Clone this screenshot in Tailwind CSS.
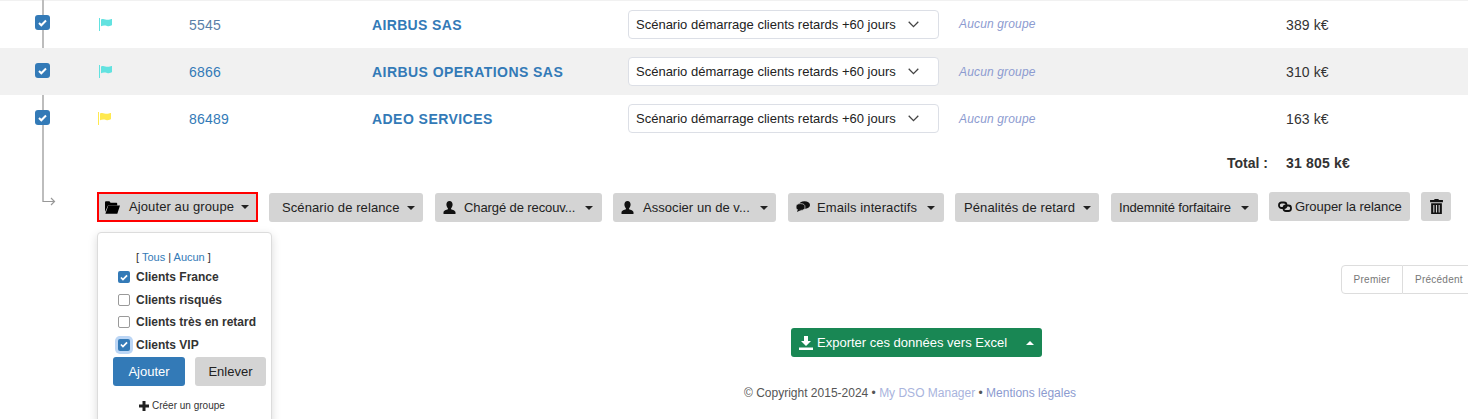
<!DOCTYPE html>
<html lang="fr"><head><meta charset="utf-8"><title>Relances</title>
<script src="https://cdn.jsdelivr.net/npm/@tailwindcss/browser@4"></script></head>
<body class="bg-white">
<div class="relative w-[1468px] h-[419px] overflow-hidden font-['Liberation_Sans',Arial,sans-serif] text-[14px] text-[#333]">
  <!-- connector line -->
  <div class="absolute left-[42px] top-0 w-[2px] h-[202px] bg-[#bdbdbd]"></div>
  <svg class="absolute left-[42px] top-[196px]" width="14" height="12" viewBox="0 0 14 12" fill="none" stroke="#999" stroke-width="1.200"><path d="M1 5.500H12.500M9 2l3.500 3.500L9 9"/></svg>

  <div class="h-px bg-[#f1f1f1]"></div>
  <div class="flex items-center h-[47px] relative">
    <div class="w-[99px] pl-[35px] -mt-[4px]"><span class="flex w-[15px] h-[15px] rounded-[3px] bg-[#337ab7] items-center justify-center"><svg width="9" height="8" viewBox="0 0 9 8" fill="none" stroke="#fff" stroke-width="2"><path d="M1 4l2.300 2.300L8 1.500"/></svg></span></div>
    <div class="w-[90px]"><svg class="block" width="14" height="14" viewBox="0 0 14 14"><path d="M0 0h1v13H0z" fill="#62e2e0"/><path d="M2 1.500c3-1.500 5 1 8 .2 1-.2 2.500-.7 3-.7v6c-1 1-3 1.500-5 1-2-.6-4-.6-6 .2z" fill="#62e2e0"/></svg></div>
    <div class="w-[183px] mt-px text-[#5a7fa8] tracking-[0.2px]">5545</div>
    <div class="w-[256px] mt-px font-bold text-[#337ab7] tracking-[0.35px]">AIRBUS SAS</div>
    <div class="w-[331px]"><div class="flex items-center justify-between w-[311px] h-[29px] rounded-[4px] border border-[#dcdfe6] bg-white pl-[7px] pr-[19px] text-[13px] whitespace-nowrap text-[#222]">Scénario démarrage clients retards +60 jours<svg width="11" height="7" viewBox="0 0 11 7" fill="none" stroke="#444" stroke-width="1.300"><path d="M.7.8l4.800 4.800L10.300.8"/></svg></div></div>
    <div class="w-[327px] italic text-[12px] tracking-[0.15px] text-[#8c9bd0] -mt-[2px]">Aucun groupe</div>
    <div class="mt-px tracking-[0.1px]">389 k€</div>
  </div>
  <div class="flex items-center h-[47px] relative bg-[#f1f1f1]">
    <div class="w-[99px] pl-[35px] -mt-[2px]"><span class="flex w-[15px] h-[15px] rounded-[3px] bg-[#337ab7] items-center justify-center"><svg width="9" height="8" viewBox="0 0 9 8" fill="none" stroke="#fff" stroke-width="2"><path d="M1 4l2.300 2.300L8 1.500"/></svg></span></div>
    <div class="w-[90px]"><svg class="block" width="14" height="14" viewBox="0 0 14 14"><path d="M0 0h1v13H0z" fill="#62e2e0"/><path d="M2 1.500c3-1.500 5 1 8 .2 1-.2 2.500-.7 3-.7v6c-1 1-3 1.500-5 1-2-.6-4-.6-6 .2z" fill="#62e2e0"/></svg></div>
    <div class="w-[183px] mt-px text-[#337ab7] tracking-[0.2px]">6866</div>
    <div class="w-[256px] mt-px font-bold text-[#337ab7] tracking-[0.45px]">AIRBUS OPERATIONS SAS</div>
    <div class="w-[331px]"><div class="flex items-center justify-between w-[311px] h-[29px] rounded-[4px] border border-[#dcdfe6] bg-white pl-[7px] pr-[19px] text-[13px] whitespace-nowrap text-[#222]">Scénario démarrage clients retards +60 jours<svg width="11" height="7" viewBox="0 0 11 7" fill="none" stroke="#444" stroke-width="1.300"><path d="M.7.8l4.800 4.800L10.300.8"/></svg></div></div>
    <div class="w-[327px] italic text-[12px] tracking-[0.15px] text-[#8c9bd0]">Aucun groupe</div>
    <div class="mt-px tracking-[0.1px]">310 k€</div>
  </div>
  <div class="flex items-center h-[47px] relative">
    <div class="w-[99px] pl-[35px] -mt-[2px]"><span class="flex w-[15px] h-[15px] rounded-[3px] bg-[#337ab7] items-center justify-center"><svg width="9" height="8" viewBox="0 0 9 8" fill="none" stroke="#fff" stroke-width="2"><path d="M1 4l2.300 2.300L8 1.500"/></svg></span></div>
    <div class="w-[90px] -ml-px mr-px"><svg class="block" width="14" height="14" viewBox="0 0 14 14"><path d="M0 0h1v13H0z" fill="#ffe94f"/><path d="M2 1.500c3-1.500 5 1 8 .2 1-.2 2.500-.7 3-.7v6c-1 1-3 1.500-5 1-2-.6-4-.6-6 .2z" fill="#ffe94f"/></svg></div>
    <div class="w-[183px] mt-px text-[#337ab7] tracking-[0.2px]">86489</div>
    <div class="w-[256px] mt-px font-bold text-[#337ab7] tracking-[0.45px]">ADEO SERVICES</div>
    <div class="w-[331px]"><div class="flex items-center justify-between w-[311px] h-[29px] rounded-[4px] border border-[#dcdfe6] bg-white pl-[7px] pr-[19px] text-[13px] whitespace-nowrap text-[#222]">Scénario démarrage clients retards +60 jours<svg width="11" height="7" viewBox="0 0 11 7" fill="none" stroke="#444" stroke-width="1.300"><path d="M.7.8l4.800 4.800L10.300.8"/></svg></div></div>
    <div class="w-[327px] mt-px italic text-[12px] tracking-[0.15px] text-[#8c9bd0]">Aucun groupe</div>
    <div class="mt-px tracking-[0.1px]">163 k€</div>
  </div>

  <div class="flex h-[51px] pt-[13px] font-bold leading-[16px]">
    <div class="w-[1268px] text-right">Total :</div>
    <div class="ml-[18px] tracking-[0.2px]">31 805 k€</div>
  </div>

  <!-- toolbar -->
  <div class="flex items-start pl-[97px] gap-[11px] h-[29px] text-[13px] whitespace-nowrap text-[#222]">
    <div class="flex items-center h-[30px] w-[161px] -mt-px border-2 border-[#f00] bg-[#d4d4d4] pl-[6px] pr-[7px]">
      <svg class="shrink-0 mr-[9px]" width="15" height="13" viewBox="0 0 15 13" fill="#000"><path d="M0 2V1.500C0 .7.500.2 1.200.2h3.200L5.600 1.700h5.600c.6 0 1 .4 1 1V4.500H3L0 11z"/><path d="M3.300 4.500H15l-2.700 8.300H.4z"/></svg>
      <span class="tracking-[0.1px]">Ajouter au groupe</span><span class="ml-auto w-0 h-0 border-x-[4px] border-x-transparent border-t-[4px] border-t-[#222]"></span>
    </div>
    <div class="flex items-center h-[29px] w-[154px] rounded-[3px] bg-[#d4d4d4] pl-[13px] pr-[8px]">
      <span class="tracking-[0.1px]">Scénario de relance</span><span class="ml-auto w-0 h-0 border-x-[4px] border-x-transparent border-t-[4px] border-t-[#222]"></span>
    </div>
    <div class="flex items-center h-[29px] w-[167px] ml-px rounded-[3px] bg-[#d4d4d4] pl-[8px] pr-[9px]">
      <svg class="shrink-0 mr-[8px]" width="13" height="13" viewBox="0 0 13 13" fill="#111"><path d="M6.500 0C8.500 0 9.600 1.500 9.600 3.600c0 1.500-.6 2.900-1.500 3.600v1.100c1.500.6 4.400 1.300 4.400 3V13H.5v-1.700c0-1.700 2.900-2.400 4.400-3V7.200C4 6.500 3.400 5.100 3.400 3.600 3.400 1.500 4.500 0 6.500 0z"/></svg>
      <span class="tracking-[-0.1px]">Chargé de recouv...</span><span class="ml-auto w-0 h-0 border-x-[4px] border-x-transparent border-t-[4px] border-t-[#222]"></span>
    </div>
    <div class="flex items-center h-[29px] w-[163px] rounded-[3px] bg-[#d4d4d4] pl-[8px] pr-[8px]">
      <svg class="shrink-0 mr-[9px]" width="13" height="13" viewBox="0 0 13 13" fill="#111"><path d="M6.500 0C8.500 0 9.600 1.500 9.600 3.600c0 1.500-.6 2.900-1.500 3.600v1.100c1.500.6 4.400 1.300 4.400 3V13H.5v-1.700c0-1.700 2.900-2.400 4.400-3V7.200C4 6.500 3.400 5.100 3.400 3.600 3.400 1.500 4.500 0 6.500 0z"/></svg>
      <span class="tracking-[0.05px]">Associer un de v...</span><span class="ml-auto w-0 h-0 border-x-[4px] border-x-transparent border-t-[4px] border-t-[#222]"></span>
    </div>
    <div class="flex items-center h-[29px] w-[156px] ml-px rounded-[3px] bg-[#d4d4d4] pl-[8px] pr-[9px]">
      <svg class="shrink-0 mr-[7px] -mt-[3px]" width="14" height="11" viewBox="0 0 14 11" fill="#111"><ellipse cx="8.500" cy="4" rx="5.500" ry="3.800"/><ellipse cx="4.500" cy="6" rx="4.500" ry="3.400" stroke="#d4d4d4" stroke-width=".7"/><path d="M2 8l-1 3 4-2z"/></svg>
      <span class="tracking-[0.1px]">Emails interactifs</span><span class="ml-auto w-0 h-0 border-x-[4px] border-x-transparent border-t-[4px] border-t-[#222]"></span>
    </div>
    <div class="flex items-center h-[29px] w-[144px] rounded-[3px] bg-[#d4d4d4] pl-[9px] pr-[8px]">
      <span class="tracking-[0.1px]">Pénalités de retard</span><span class="ml-auto w-0 h-0 border-x-[4px] border-x-transparent border-t-[4px] border-t-[#222]"></span>
    </div>
    <div class="flex items-center h-[29px] w-[147px] ml-px rounded-[3px] bg-[#d4d4d4] pl-[8px] pr-[9px]">
      <span class="tracking-[-0.15px]">Indemnité forfaitaire</span><span class="ml-auto w-0 h-0 border-x-[4px] border-x-transparent border-t-[4px] border-t-[#222]"></span>
    </div>
    <div class="flex items-center h-[29px] w-[141px] -mt-px rounded-[3px] bg-[#d4d4d4] pl-[9px]">
      <svg class="shrink-0 mr-[3px]" width="14" height="12" viewBox="0 0 14 12" fill="none" stroke="#111" stroke-width="1.800"><rect x="1" y="1.500" width="7.500" height="5.500" rx="2.500"/><rect x="5.500" y="4.500" width="7.500" height="5.500" rx="2.500"/></svg>
      <span class="tracking-[-0.05px]">Grouper la relance</span>
    </div>
    <div class="flex items-center justify-center h-[29px] w-[30px] -mt-px rounded-[3px] bg-[#d4d4d4]">
      <svg class="-mt-[1px]" width="13" height="15" viewBox="0 0 12 14" fill="#111"><path d="M4 0h4v1h4v2H0V1h4z"/><path d="M1 4h10v10H1zM3 5.500v7h1v-7zm2.500 0v7h1v-7zm2.500 0v7h1v-7z" fill-rule="evenodd"/></svg>
    </div>
  </div>

  <!-- group dropdown -->
  <div class="absolute left-[97px] top-[232px] w-[175px] h-[200px] rounded-[4px] border border-[#dcdcdc] bg-white shadow-[0_3px_10px_rgba(0,0,0,0.15)]">
    <div class="absolute left-[38px] top-[17px] text-[11px] leading-[14px] text-[#333]">[ <span class="text-[#337ab7]">Tous</span> | <span class="text-[#337ab7]">Aucun</span> ]</div>
    <div class="absolute left-[20px] top-[33px] flex flex-col text-[12px] font-bold text-[#333]">
      <label class="flex items-center gap-[6px] h-[22px]"><span class="flex w-[12px] h-[12px] rounded-[2px] bg-[#337ab7] items-center justify-center"><svg width="8" height="7" viewBox="0 0 9 8" fill="none" stroke="#fff" stroke-width="2"><path d="M1 4l2.300 2.300L8 1.500"/></svg></span>Clients France</label>
      <label class="flex items-center gap-[6px] h-[23px]"><span class="w-[12px] h-[12px] rounded-[2px] border border-[#9a9a9a] bg-white"></span>Clients risqués</label>
      <label class="flex items-center gap-[6px] h-[22px]"><span class="w-[12px] h-[12px] rounded-[2px] border border-[#9a9a9a] bg-white"></span>Clients très en retard</label>
      <label class="flex items-center gap-[6px] h-[23px]"><span class="flex w-[12px] h-[12px] rounded-[2px] bg-[#337ab7] items-center justify-center ring-[3px] ring-[#bcd6f5]"><svg width="8" height="7" viewBox="0 0 9 8" fill="none" stroke="#fff" stroke-width="2"><path d="M1 4l2.300 2.300L8 1.500"/></svg></span>Clients VIP</label>
    </div>
    <div class="absolute left-[15px] top-[124px] flex gap-[10px] text-[13px]">
      <div class="flex items-center justify-center w-[72px] h-[29px] rounded-[3px] bg-[#337ab7] text-white">Ajouter</div>
      <div class="flex items-center justify-center w-[71px] h-[29px] rounded-[3px] bg-[#d4d4d4] text-[#222]">Enlever</div>
    </div>
    <div class="absolute left-[41px] top-[166px] flex items-center gap-[3px] text-[10px] leading-[14px] text-[#333]"><svg width="10" height="10" viewBox="0 0 10 10" fill="#222"><path d="M3.500 0h3v3.500H10v3H6.500V10h-3V6.500H0v-3h3.500z"/></svg>Créer un groupe</div>
  </div>

  <!-- pagination -->
  <div class="flex ml-[1341px] w-max mt-[43px] text-[10px] tracking-[0.25px] text-[#777]">
    <div class="flex items-center h-[29px] w-[62px] justify-center rounded-l-[4px] border border-[#ddd]">Premier</div>
    <div class="flex items-center h-[29px] pl-[12px] pr-[12px] border border-l-0 border-[#ddd]">Précédent</div>
  </div>

  <!-- export -->
  <div class="ml-[791px] mt-[34px] flex items-center w-[251px] h-[29px] rounded-[3px] bg-[#198754] text-[13px] text-white pl-[8px] pr-[8px]">
    <svg class="shrink-0 mr-[4px]" width="14" height="14" viewBox="0 0 14 14" fill="#fff"><path d="M5 0h4v5h3L7 10 2 5h3z"/><path d="M0 11.500h14V14H0z"/></svg>
    <span>Exporter ces données vers Excel</span><span class="ml-auto w-0 h-0 border-x-[4px] border-x-transparent border-b-[4px] border-b-white"></span>
  </div>

  <!-- footer -->
  <div class="ml-[744px] mt-[29px] text-[12px] leading-[14px] text-[#555]">© Copyright 2015-2024 • <span class="text-[#a9b4dd]">My DSO Manager</span> • <span class="text-[#8c9bd0]">Mentions légales</span></div>
</div>
</body></html>
